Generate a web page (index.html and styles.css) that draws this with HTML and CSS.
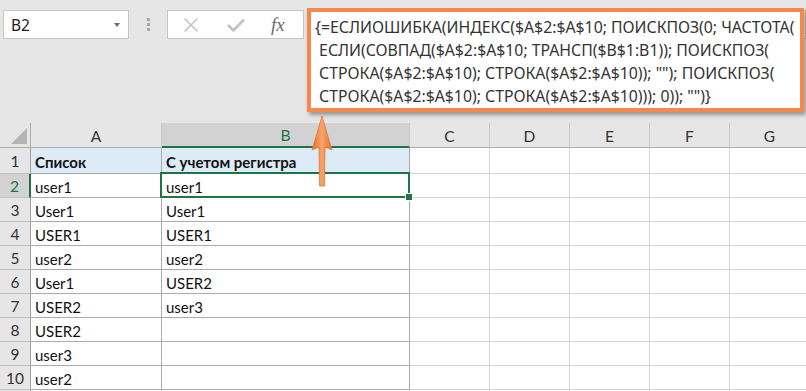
FILE: index.html
```html
<!DOCTYPE html>
<html lang="ru">
<head>
  <meta charset="UTF-8">
  <title>Excel</title>
  <link rel="stylesheet" href="styles.css">
</head>
<body>
  <div class="toolbar">
    <div class="namebox">
      <span class="name">B2</span>
      <span class="drop"></span>
    </div>
    <div class="dots"><i></i><i></i><i></i></div>
    <div class="fxbar">
      <div class="fx-icons">
        <svg class="ico" width="16" height="16" viewBox="0 0 16 16"><path d="M1.5 1.5 L14.5 14.5 M14.5 1.5 L1.5 14.5" stroke="#c3c3c3" stroke-width="1.6" fill="none"/></svg>
        <svg class="ico" width="18" height="14" viewBox="0 0 18 14"><path d="M1 7 L6.5 12.5 L17 1.5" stroke="#c3c3c3" stroke-width="2.6" fill="none"/></svg>
        <span class="fx">fx</span>
      </div>
      <div class="fx-input"></div>
    </div>
    <!-- expanded formula box lies over the bar -->
    <div class="formula">
      <div class="fline">{=ЕСЛИОШИБКА(ИНДЕКС($A$2:$A$10; ПОИСКПОЗ(0; ЧАСТОТА(</div>
      <div class="fline"> ЕСЛИ(СОВПАД($A$2:$A$10; ТРАНСП($B$1:B1)); ПОИСКПОЗ(</div>
      <div class="fline"> СТРОКА($A$2:$A$10); СТРОКА($A$2:$A$10)); ""); ПОИСКПОЗ(</div>
      <div class="fline"> СТРОКА($A$2:$A$10); СТРОКА($A$2:$A$10))); 0)); "")}</div>
    </div>
  </div>

  <div class="sheet">
    <div class="hd corner"><span class="tri"></span></div>
    <div class="hd">A</div>
    <div class="hd hd-sel">B</div>
    <div class="hd">C</div>
    <div class="hd">D</div>
    <div class="hd">E</div>
    <div class="hd">F</div>
    <div class="hd">G</div>

    <div class="rh">1</div>
    <div class="c t blue bold">Список</div>
    <div class="c t blue bold">С учетом регистра</div>
    <div class="c"></div><div class="c"></div><div class="c"></div><div class="c"></div><div class="c"></div>

    <div class="rh rh-sel">2</div>
    <div class="c t">user1</div>
    <div class="c t sel">user1<span class="handle"></span></div>
    <div class="c"></div><div class="c"></div><div class="c"></div><div class="c"></div><div class="c"></div>

    <div class="rh">3</div>
    <div class="c t">User1</div>
    <div class="c t">User1</div>
    <div class="c"></div><div class="c"></div><div class="c"></div><div class="c"></div><div class="c"></div>

    <div class="rh">4</div>
    <div class="c t">USER1</div>
    <div class="c t">USER1</div>
    <div class="c"></div><div class="c"></div><div class="c"></div><div class="c"></div><div class="c"></div>

    <div class="rh">5</div>
    <div class="c t">user2</div>
    <div class="c t">user2</div>
    <div class="c"></div><div class="c"></div><div class="c"></div><div class="c"></div><div class="c"></div>

    <div class="rh">6</div>
    <div class="c t">User1</div>
    <div class="c t">USER2</div>
    <div class="c"></div><div class="c"></div><div class="c"></div><div class="c"></div><div class="c"></div>

    <div class="rh">7</div>
    <div class="c t">USER2</div>
    <div class="c t">user3</div>
    <div class="c"></div><div class="c"></div><div class="c"></div><div class="c"></div><div class="c"></div>

    <div class="rh">8</div>
    <div class="c t">USER2</div>
    <div class="c t"></div>
    <div class="c"></div><div class="c"></div><div class="c"></div><div class="c"></div><div class="c"></div>

    <div class="rh">9</div>
    <div class="c t">user3</div>
    <div class="c t"></div>
    <div class="c"></div><div class="c"></div><div class="c"></div><div class="c"></div><div class="c"></div>

    <div class="rh">10</div>
    <div class="c t">user2</div>
    <div class="c t"></div>
    <div class="c"></div><div class="c"></div><div class="c"></div><div class="c"></div><div class="c"></div>

    <div class="rh last"></div>
    <div class="c last"></div><div class="c last"></div>
    <div class="c last"></div><div class="c last"></div><div class="c last"></div><div class="c last"></div><div class="c last"></div>
  </div>

  <svg class="arrow" width="30" height="80" viewBox="0 0 30 80">
    <defs>
      <linearGradient id="ag" x1="0" y1="0" x2="1" y2="0">
        <stop offset="0" stop-color="#e56f2a"/>
        <stop offset="0.5" stop-color="#f7a46c"/>
        <stop offset="1" stop-color="#e56f2a"/>
      </linearGradient>
    </defs>
    <path d="M15 2 L25 36 L18 33 L17.5 72 L12.5 72 L12 33 L5 36 Z" fill="url(#ag)" stroke="#e9783a" stroke-width="0.8"/>
  </svg>
</body>
</html>
```

FILE: styles.css
```css
body {
  margin: 0;
  width: 806px;
  height: 391px;
  overflow: hidden;
  background: #e6e6e6;
  position: relative;
  font-family: Lato, "Open Sans", sans-serif;
}
.toolbar {
  height: 123px;
  position: relative;
  display: flex;
  align-items: flex-start;
  padding-top: 10px;
  box-sizing: border-box;
}
.namebox {
  margin-left: 3px;
  width: 126px;
  height: 29px;
  box-sizing: border-box;
  background: #fff;
  border: 1px solid #c6c6c6;
  display: flex;
  align-items: center;
  justify-content: space-between;
  padding: 0 8px 0 7px;
}
.name {
  font-family: "Noto Sans", sans-serif;
  font-size: 15.5px;
  color: #222;
}
.drop {
  width: 0;
  height: 0;
  border-left: 3.5px solid transparent;
  border-right: 3.5px solid transparent;
  border-top: 4px solid #6d6d6d;
}
.dots {
  width: 38px;
  height: 29px;
  display: flex;
  flex-direction: column;
  align-items: center;
  justify-content: center;
  gap: 2px;
}
.dots i {
  width: 3px;
  height: 3px;
  background: #a9a9a9;
}
.fxbar {
  flex: 1;
  height: 29px;
  display: flex;
}
.fx-icons {
  width: 137px;
  box-sizing: border-box;
  background: #fff;
  border: 1px solid #c6c6c6;
  display: flex;
  align-items: center;
  padding-left: 15px;
  gap: 28px;
}
.fx-icons .ico {
  flex: none;
}
.fx {
  font-family: "Liberation Serif", serif;
  font-style: italic;
  font-size: 19px;
  color: #6b6b6b;
  margin-left: -2px;
}
.fx-input {
  flex: 1;
  margin-left: 3px;
  background: #fff;
  border: 1px solid #c6c6c6;
}
.formula {
  position: absolute;
  left: 307px;
  top: 8px;
  width: 497px;
  height: 104px;
  box-sizing: border-box;
  background: #fff;
  border: 4px solid #f5884c;
  box-shadow: 2px 3px 4px rgba(0, 0, 0, 0.35);
  padding: 4px 0 0 4px;
  font-family: "Noto Sans", sans-serif;
  font-size: 15.8px;
  color: #333;
}
.fline {
  height: 23px;
  line-height: 23px;
  white-space: pre;
}

.sheet {
  display: grid;
  grid-template-columns: 31px 131px 248px repeat(5, 80px);
  grid-template-rows: 25px 26px repeat(9, 24px) 1px;
  font-size: 15px;
}
.hd {
  background: #e6e6e6;
  border-right: 1px solid #cacaca;
  border-bottom: 1px solid #ababab;
  display: flex;
  align-items: center;
  justify-content: center;
  color: #333;
  font-size: 15.5px;
  padding-top: 1px;
  box-sizing: border-box;
}
.corner {
  position: relative;
  border-right-color: #ababab;
}
.tri {
  position: absolute;
  right: 3px;
  bottom: 3px;
  width: 0;
  height: 0;
  border-left: 16px solid transparent;
  border-bottom: 16px solid #b4b4b4;
}
.hd-sel {
  background: #d2d2d2;
  color: #217346;
  border-bottom: 2px solid #217346;
}
.rh {
  background: #e6e6e6;
  border-right: 1px solid #9e9e9e;
  border-bottom: 1px solid #c0c0c0;
  display: flex;
  align-items: center;
  justify-content: center;
  color: #333;
  font-size: 15.5px;
  padding-top: 1px;
  box-sizing: border-box;
}
.rh-sel {
  background: #d2d2d2;
  color: #217346;
  border-right: 2px solid #217346;
}
.c {
  background: #fff;
  border-right: 1px solid #d4d4d4;
  border-bottom: 1px solid #d4d4d4;
  box-sizing: border-box;
  padding: 2px 4px 0;
  display: flex;
  align-items: center;
  color: #111;
  white-space: nowrap;
}
.t {
  border-color: #ababab;
}
.last {
  border-bottom: none;
  padding: 0;
}
.blue {
  background: #ddebf7;
}
.bold {
  font-weight: bold;
}
.sel {
  position: relative;
}
.sel::after {
  content: "";
  position: absolute;
  left: -2px;
  top: -2px;
  right: -1px;
  bottom: -1px;
  border: 2px solid #217346;
}
.handle {
  position: absolute;
  right: -4px;
  bottom: -4px;
  width: 6px;
  height: 6px;
  background: #217346;
  border: 1px solid #fff;
  z-index: 2;
}
.arrow {
  position: absolute;
  left: 307px;
  top: 114px;
}
```
